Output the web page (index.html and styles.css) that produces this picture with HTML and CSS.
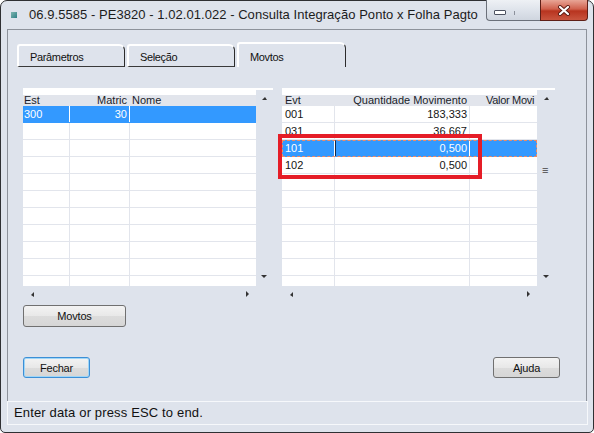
FILE: index.html
```html
<!DOCTYPE html>
<html lang="pt">
<head>
<meta charset="utf-8">
<title>Consulta Integração Ponto x Folha Pagto</title>
<link rel="stylesheet" href="styles.css">
</head>
<body>
<div class="window">
  <div class="titlebar">
    <span class="app-icon"></span>
    <span class="title">06.9.5585 - PE3820 - 1.02.01.022 - Consulta Integração Ponto x Folha Pagto</span>
    <div class="caption-btns">
      <div class="cap-min"><span class="min-glyph"></span><span class="max-tick"></span></div>
      <div class="cap-close">
        <svg width="14" height="11" viewBox="0 0 14 11"><path d="M3 2 L11 9 M11 2 L3 9" stroke="#5a1a12" stroke-width="4" stroke-linecap="round"/><path d="M3 2 L11 9 M11 2 L3 9" stroke="#ffffff" stroke-width="2.2" stroke-linecap="round"/></svg>
      </div>
    </div>
  </div>

  <div class="client">
    <div class="tabs">
      <div class="tab">Parâmetros</div>
      <div class="tab">Seleção</div>
      <div class="tab active">Movtos</div>
    </div>

    <div class="grids">
      <div class="grid grid-left">
        <div class="grid-data">
          <div class="row head"><span class="c">Est</span><span class="c r">Matric</span><span class="c">Nome</span></div>
          <div class="row sel"><span class="c">300</span><span class="c r">30</span><span class="c"></span></div>
          <div class="row"><span class="c"></span><span class="c"></span><span class="c"></span></div>
          <div class="row"><span class="c"></span><span class="c"></span><span class="c"></span></div>
          <div class="row"><span class="c"></span><span class="c"></span><span class="c"></span></div>
          <div class="row"><span class="c"></span><span class="c"></span><span class="c"></span></div>
          <div class="row"><span class="c"></span><span class="c"></span><span class="c"></span></div>
          <div class="row"><span class="c"></span><span class="c"></span><span class="c"></span></div>
          <div class="row"><span class="c"></span><span class="c"></span><span class="c"></span></div>
          <div class="row"><span class="c"></span><span class="c"></span><span class="c"></span></div>
          <div class="row"><span class="c"></span><span class="c"></span><span class="c"></span></div>
          <div class="row"><span class="c"></span><span class="c"></span><span class="c"></span></div>
        </div>
        <div class="vscroll">
          <svg class="arr" width="7" height="5" viewBox="0 0 7 5"><path d="M1 4 L4 1 L6 4 Z" fill="#333"/></svg>
          <svg class="arr" width="7" height="5" viewBox="0 0 7 5"><path d="M0 1 L6 1 L3 4 Z" fill="#333"/></svg>
        </div>
        <div class="hscroll">
          <svg class="arr" width="5" height="7" viewBox="0 0 5 7"><path d="M4 1 L1 4 L4 6 Z" fill="#333"/></svg>
          <svg class="arr" width="5" height="7" viewBox="0 0 5 7"><path d="M1 0 L4 3 L1 6 Z" fill="#333"/></svg>
        </div>
        <div class="corner"></div>
      </div>

      <div class="grid grid-right">
        <div class="grid-data">
          <div class="row head"><span class="c">Evt</span><span class="c r">Quantidade Movimento</span><span class="c clip">Valor Movi</span></div>
          <div class="row"><span class="c">001</span><span class="c r">183,333</span><span class="c"></span></div>
          <div class="row"><span class="c">031</span><span class="c r">36,667</span><span class="c"></span></div>
          <div class="row sel focus"><span class="c">101</span><span class="c r cur">0,500</span><span class="c"></span></div>
          <div class="row"><span class="c">102</span><span class="c r">0,500</span><span class="c"></span></div>
          <div class="row"><span class="c"></span><span class="c"></span><span class="c"></span></div>
          <div class="row"><span class="c"></span><span class="c"></span><span class="c"></span></div>
          <div class="row"><span class="c"></span><span class="c"></span><span class="c"></span></div>
          <div class="row"><span class="c"></span><span class="c"></span><span class="c"></span></div>
          <div class="row"><span class="c"></span><span class="c"></span><span class="c"></span></div>
          <div class="row"><span class="c"></span><span class="c"></span><span class="c"></span></div>
          <div class="row"><span class="c"></span><span class="c"></span><span class="c"></span></div>
        </div>
        <div class="vscroll">
          <svg class="arr" width="7" height="5" viewBox="0 0 7 5"><path d="M1 4 L4 1 L6 4 Z" fill="#333"/></svg>
          <span class="thumb">≡</span>
          <svg class="arr" width="7" height="5" viewBox="0 0 7 5"><path d="M0 1 L6 1 L3 4 Z" fill="#333"/></svg>
        </div>
        <div class="hscroll">
          <svg class="arr" width="5" height="7" viewBox="0 0 5 7"><path d="M4 1 L1 4 L4 6 Z" fill="#333"/></svg>
          <svg class="arr" width="5" height="7" viewBox="0 0 5 7"><path d="M1 0 L4 3 L1 6 Z" fill="#333"/></svg>
        </div>
        <div class="corner"></div>
      </div>

      <div class="highlight"></div>
    </div>

    <button class="btn btn-movtos">Movtos</button>

    <div class="footer">
      <button class="btn btn-default">Fechar</button>
      <button class="btn">Ajuda</button>
    </div>
  </div>

  <div class="statusbar">Enter data or press ESC to end.</div>
</div>
</body>
</html>
```
FILE: styles.css
```css
* { box-sizing: border-box; }
html, body { margin: 0; padding: 0; }
body {
  width: 594px;
  height: 433px;
  overflow: hidden;
  background: #ffffff;
  font-family: "Liberation Sans", Arial, sans-serif;
}

.window {
  width: 594px;
  height: 433px;
  border: 1px solid #2f3033;
  border-radius: 7px 7px 5px 5px;
  background: #dee3ec;
  display: flex;
  flex-direction: column;
}

/* title bar */
.titlebar {
  height: 28px;
  display: flex;
  align-items: flex-start;
  flex: none;
}
.app-icon {
  width: 6px;
  height: 6px;
  margin: 11px 0 0 10px;
  background: linear-gradient(135deg, #7fb5b0, #2e7f86);
}
.title {
  margin: 6px 0 0 12px;
  font-family: "Liberation Sans", Arial, sans-serif;
  font-size: 13px;
  letter-spacing: 0.05px;
  line-height: 16px;
  color: #1c1c1c;
  white-space: nowrap;
}
.caption-btns {
  margin: -1px 5px 0 auto;
  display: flex;
}
.cap-min {
  position: relative;
  width: 54px;
  height: 21px;
  border: 1px solid #6b707a;
  border-top: none;
  border-right: none;
  border-radius: 0 0 0 4px;
  background: linear-gradient(#eef1f5, #dde2ea 55%, #cfd5df);
}
.min-glyph {
  position: absolute;
  left: 7px;
  top: 10px;
  width: 12px;
  height: 5px;
  background: #ffffff;
  border: 1px solid #4d5260;
  border-radius: 1px;
}
.max-tick {
  position: absolute;
  left: 27px;
  top: 11px;
  width: 1px;
  height: 4px;
  background: #8c919b;
}
.cap-close {
  width: 48px;
  height: 21px;
  border: 1px solid #5e1f17;
  border-top: none;
  border-radius: 0 0 4px 0;
  background: linear-gradient(#e8a596, #d0614d 45%, #b8341f 55%, #c9553f);
  display: flex;
  align-items: center;
  justify-content: center;
}

/* client area */
.client {
  flex: 1;
  margin: 0 6px;
  border: 1px solid #8d929b;
  border-bottom: none;
  display: flex;
  flex-direction: column;
}

.tabs {
  display: flex;
  align-items: flex-end;
  gap: 2px;
  margin-top: 12px;
  padding-left: 9px;
  height: 25px;
}
.tab {
  width: 108px;
  height: 23px;
  padding: 4px 0 0 11px;
  border-top: 2px solid #ffffff;
  border-left: 2px solid #ffffff;
  border-right: 1px solid #2c2c2c;
  border-bottom: 1px solid #3a3a3a;
  border-radius: 3px 6px 0 0;
  font-size: 11px;
  letter-spacing: -0.35px;
  color: #111;
  line-height: 14px;
}
.tab.active {
  width: 109px;
  height: 25px;
  padding-top: 6px;
  border-bottom: none;
}

.grids {
  position: relative;
  display: flex;
  gap: 9px;
  margin-top: 21px;
  padding-left: 15px;
}
.grid {
  display: grid;
  grid-template-rows: 1fr 16px;
  height: 214px;
  background: #ffffff;
}
.grid-left { width: 250px; grid-template-columns: 1fr 17px; }
.grid-right { width: 273px; grid-template-columns: 1fr 18px; }

.grid-data {
  overflow: hidden;
  font-size: 11px;
  color: #141414;
}
.row {
  display: grid;
  height: 17px;
  border-bottom: 1px solid #e2e5ec;
  line-height: 16px;
}
.grid-left .row { grid-template-columns: 47px 60px 1fr; }
.grid-right .row { grid-template-columns: 53px 135px 1fr; }
.c {
  border-right: 1px solid #e2e5ec;
  padding: 0 2px 0 2px;
  white-space: nowrap;
  overflow: hidden;
}
.c:last-child { border-right: none; }
.c.r { text-align: right; }
.row.head {
  height: 18px;
  border-bottom: none;
  background: linear-gradient(#ffffff 0 7px, #e2e5ec 7px);
  line-height: 11px;
  padding-top: 7px;
  color: #1a1d2a;
}
.row.head .c { padding-top: 0; }
.grid-right .row.head .c.clip { padding-left: 16px; letter-spacing: -0.3px; }
.grid-right .row .c:first-child { padding-left: 3px; }
.grid-left .row .c:first-child { padding-left: 1px; }

.row.sel {
  background: #3399ff;
  color: #ffffff;
  border-bottom-color: #3399ff;
}
.row.sel .c { border-right-color: #ffffff; }
.row.focus {
  outline: 1px dashed #f08a62;
  outline-offset: -1px;
}
.row.focus .c.cur { border-left: 1px solid #1c2a44; }

.vscroll {
  margin-top: 2px;
  background: #dee3ec;
  display: flex;
  flex-direction: column;
  align-items: center;
  justify-content: space-between;
  padding: 6px 0 7px;
  position: relative;
}
.thumb {
  position: absolute;
  top: 73px;
  left: 5px;
  font-size: 11px;
  line-height: 14px;
  color: #444;
}
.hscroll {
  background: #dee3ec;
  display: flex;
  align-items: center;
  justify-content: space-between;
  padding: 0 6px 0 7px;
}
.corner { background: #dee3ec; }

.highlight {
  position: absolute;
  left: 270px;
  top: 46px;
  width: 204px;
  height: 45px;
  border: 4px solid #e51d27;
}

/* buttons */
.btn {
  font-family: "Liberation Sans", Arial, sans-serif;
  font-size: 11px;
  color: #111;
  background: linear-gradient(#f3f3f3, #e8e8e8 50%, #dcdcdc 51%, #d6d6d6);
  border: 1px solid #707070;
  border-radius: 3px;
  padding: 0;
  letter-spacing: -0.2px;
}
.btn-movtos {
  align-self: flex-start;
  width: 103px;
  height: 22px;
  margin: 3px 0 0 15px;
}
.footer {
  display: flex;
  justify-content: space-between;
  margin-top: 30px;
  padding: 0 26px 0 15px;
}
.footer .btn { width: 67px; height: 21px; }
.btn-default {
  border-color: #3c8fd6;
  box-shadow: inset 0 0 0 1px #9fd6f7;
}

/* status bar */
.statusbar {
  flex: none;
  height: 24px;
  margin: 0 5px 7px 6px;
  border: 1px solid #f6f8fb;
  padding-left: 6px;
  font-size: 13px;
  letter-spacing: 0.15px;
  line-height: 22px;
  color: #111;
}
```
